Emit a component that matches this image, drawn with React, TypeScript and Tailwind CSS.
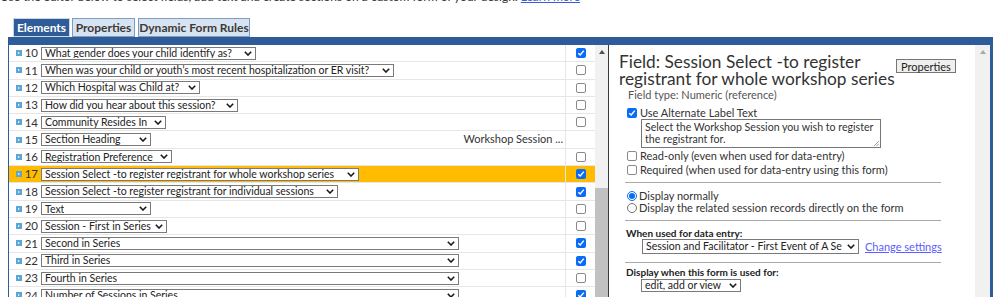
import React from 'react';

type Row = { n: number; label: string; w: number; checked?: boolean; note?: string; active?: boolean };

const rows: Row[] = [
  { n: 10, label: 'What gender does your child identify as?', w: 215, checked: true },
  { n: 11, label: 'When was your child or youth’s most recent hospitalization or ER visit?', w: 353, checked: false },
  { n: 12, label: 'Which Hospital was Child at?', w: 159, checked: false },
  { n: 13, label: 'How did you hear about this session?', w: 197, checked: false },
  { n: 14, label: 'Community Resides In', w: 125, checked: false },
  { n: 15, label: 'Section Heading', w: 110, note: 'Workshop Session ...' },
  { n: 16, label: 'Registration Preference', w: 131, checked: false },
  { n: 17, label: 'Session Select -to register registrant for whole workshop series', w: 318, checked: true, active: true },
  { n: 18, label: 'Session Select -to register registrant for individual sessions', w: 297, checked: true },
  { n: 19, label: 'Text', w: 110, checked: false },
  { n: 20, label: 'Session - First in Series', w: 126, checked: false },
  { n: 21, label: 'Second in Series', w: 418, checked: true },
  { n: 22, label: 'Third in Series', w: 418, checked: true },
  { n: 23, label: 'Fourth in Series', w: 418, checked: false },
  { n: 24, label: 'Number of Sessions in Series', w: 418, checked: true },
];

const Chevron = () => (
  <svg width="8" height="5" viewBox="0 0 8 5" className="shrink-0">
    <path d="M0.8 0.8 L4 4 L7.2 0.8" fill="none" stroke="#1a1a1a" strokeWidth="1.6" />
  </svg>
);

const Check = ({ on }: { on?: boolean }) =>
  on ? (
    <span className="inline-flex h-[10px] w-[10px] shrink-0 items-center justify-center rounded-[2px] bg-[#0a6cf5]">
      <svg width="8" height="8" viewBox="0 0 8 8">
        <path d="M1.3 4.2 L3.2 6 L6.8 1.6" fill="none" stroke="#fff" strokeWidth="1.4" />
      </svg>
    </span>
  ) : (
    <span className="inline-block h-[10px] w-[10px] shrink-0 rounded-[2px] border border-[#8a8a8a] bg-white" />
  );

const Radio = ({ on }: { on?: boolean }) =>
  on ? (
    <span className="inline-flex h-[10px] w-[10px] shrink-0 items-center justify-center rounded-full border border-[#0a6cf5] bg-white">
      <span className="h-[6px] w-[6px] rounded-full bg-[#0a6cf5]" />
    </span>
  ) : (
    <span className="inline-block h-[10px] w-[10px] shrink-0 rounded-full border border-[#6f6f6f] bg-white" />
  );

const Select = ({ label, w, tall }: { label: string; w: number; tall?: boolean }) => (
  <div
    className={`flex ${tall ? 'h-[15px]' : 'h-[13px]'} items-center justify-between gap-[2px] overflow-hidden border border-[#7a7a7a] bg-white pl-[3px] pr-[3px] text-[10.5px] leading-none text-[#222]`}
    style={{ width: w }}
  >
    <span className="overflow-hidden whitespace-nowrap">{label}</span>
    <Chevron />
  </div>
);

const RowIcon = () => (
  <span className="inline-flex h-[6px] w-[6px] items-center justify-center bg-[#5aa6d6]">
    <span className="h-0 w-0 border-y-[1.5px] border-l-[2px] border-y-transparent border-l-white" />
  </span>
);

const Rule = () => <div className="ml-[6px] h-px w-[316px] bg-[#a9a9a9]" />;

export default function App() {
  return (
    <div className="h-[297px] w-[999px] overflow-hidden bg-white font-['Lato','Liberation_Sans',sans-serif] text-[#333]">
      {/* intro line, mostly scrolled off */}
      <div className="h-[18px] overflow-hidden">
        <p className="-mt-[10px] whitespace-nowrap text-[12px] leading-[14px] text-[#333]">
          Use the editor below to select fields, add text and create sections on a custom form of your design.{' '}
          <span className="text-[#3b5bdb] underline">Learn more</span>
        </p>
      </div>

      {/* tabs */}
      <div className="flex h-[19px] gap-[2px] pl-[13px]">
        <div className="flex h-full w-[57px] items-center justify-center border border-[#c9d6ea] bg-[#2d5c99] text-[12px] font-bold text-white">
          Elements
        </div>
        <div className="flex h-full w-[63px] items-center justify-center border border-[#7f9cc4] bg-[#d8e3f1] text-[12px] font-bold text-[#3a3a3a]">
          Properties
        </div>
        <div className="ml-[1px] flex h-full w-[112px] items-center justify-center border border-[#7f9cc4] bg-[#d8e3f1] text-[12px] font-bold text-[#3a3a3a]">
          Dynamic Form Rules
        </div>
      </div>

      {/* editor frame */}
      <div className="ml-[8px] flex h-[260px] w-[985px] border-l border-r-[3px] border-t-[8px] border-[#2d5c99]">
        {/* element list */}
        <div className="w-[586px] shrink-0">
          {rows.map((r) => (
            <div
              key={r.n}
              className={`flex h-[17.3px] items-center border-b border-[#e6e6e6] ${r.active ? 'bg-[#ffbc00]' : 'bg-white'}`}
            >
              <div className="flex min-w-0 flex-1 items-center pl-[7px]">
                <RowIcon />
                <span className="w-[19px] pr-[3px] text-right text-[11.5px] leading-none text-[#333]">{r.n}</span>
                <Select label={r.label} w={r.w} />
                {r.note && (
                  <span className="ml-auto pr-[2px] text-[11px] whitespace-nowrap text-[#333]">{r.note}</span>
                )}
              </div>
              <div className="flex h-full w-[30px] items-center justify-center border-l border-[#e6e6e6]">
                {r.note ? null : <Check on={r.checked} />}
              </div>
            </div>
          ))}
        </div>

        {/* list scrollbar */}
        <div className="flex w-[13px] shrink-0 flex-col bg-[#f1f1f1]">
          <div className="flex h-[14px] items-center justify-center">
            <span className="h-0 w-0 border-x-[3px] border-b-[4px] border-x-transparent border-b-[#505050]" />
          </div>
          <div className="flex-1" />
          <div className="h-[109px] bg-[#c1c1c1]" />
        </div>

        {/* properties panel */}
        <div className="flex min-w-0 flex-1 border-l border-[#3a3a3a]">
          <div className="flex-1 pl-[10px] pt-[8px] text-[11px] leading-[12px] text-[#333]">
            <div className="flex h-[34px] items-start">
              <h2 className="w-[277px] shrink-0 text-[17.3px] leading-[17px] font-normal text-[#333]">
                Field: Session Select -to register registrant for whole workshop series
              </h2>
              <button className="mt-[6px] h-[14px] border border-[#767676] bg-[#efefef] px-[4px] text-[11px] leading-none text-[#222]">
                Properties
              </button>
            </div>
            <div className="mt-[2px] h-[12px] pl-[9px] text-[#555]">Field type: Numeric (reference)</div>

            <div className="mt-[6px] pl-[8px]">
              <label className="flex h-[12px] items-center gap-[3px]">
                <Check on />
                <span>Use Alternate Label Text</span>
              </label>
              <div className="relative ml-[14px] h-[29px] w-[240px] border border-[#767676] px-[3px] py-[1px] text-[10.6px] leading-[12px]">
                Select the Workshop Session you wish to register the registrant for.
                <svg width="6" height="6" viewBox="0 0 6 6" className="absolute bottom-[1px] right-[1px]">
                  <path d="M1 6 L6 1 M3.5 6 L6 3.5" stroke="#888" strokeWidth="0.8" />
                </svg>
              </div>
              <label className="mt-[2px] flex h-[12px] items-center gap-[3px]">
                <Check />
                <span>Read-only (even when used for data-entry)</span>
              </label>
              <label className="mt-[2px] flex h-[12px] items-center gap-[3px]">
                <Check />
                <span>Required (when used for data-entry using this form)</span>
              </label>
            </div>

            <div className="mt-[6px]">
              <Rule />
            </div>

            <div className="mt-[7px] pl-[8px]">
              <label className="flex h-[12px] items-center gap-[2px]">
                <Radio on />
                <span>Display normally</span>
              </label>
              <label className="flex h-[12px] items-center gap-[2px]">
                <Radio />
                <span>Display the related session records directly on the form</span>
              </label>
            </div>

            <div className="mt-[6px]">
              <Rule />
            </div>

            <div className="mt-[7px] h-[10px] pl-[7px] text-[10px] leading-[10px] font-bold text-[#222]">
              When used for data entry:
            </div>
            <div className="mt-[1px] flex items-center gap-[6px] pl-[23px]">
              <Select label="Session and Facilitator - First Event of A Se" w={217} tall />
              <span className="text-[11px] text-[#5c5cff] underline">Change settings</span>
            </div>

            <div className="mt-[8px]">
              <Rule />
            </div>

            <div className="mt-[4px] h-[10px] pl-[7px] text-[10px] leading-[10px] font-bold text-[#222]">
              Display when this form is used for:
            </div>
            <div className="mt-[2px] pl-[22px]">
              <Select label="edit, add or view" w={100} />
            </div>
          </div>

          {/* panel scrollbar */}
          <div className="w-[15px] shrink-0 bg-[#f1f1f1]">
            <div className="flex h-[14px] items-center justify-center">
              <span className="h-0 w-0 border-x-[3px] border-b-[4px] border-x-transparent border-b-[#a8a8a8]" />
            </div>
          </div>
        </div>
      </div>
    </div>
  );
}
